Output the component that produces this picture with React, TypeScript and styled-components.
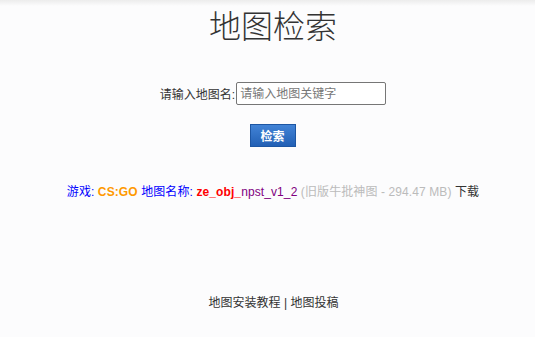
import React from 'react';
import styled, { createGlobalStyle } from 'styled-components';

const GlobalStyle = createGlobalStyle`
  html, body {
    margin: 0;
    padding: 0;
    background: #fcfcfd;
    font-family: "Liberation Sans", "Noto Sans CJK SC", sans-serif;
    color: #333;
  }
`;

const Page = styled.div`
  min-height: 337px;
  padding-left: 11px;
  display: flex;
  flex-direction: column;
  align-items: center;
  background: linear-gradient(#ececec 0px, #fcfcfd 6px);
`;

const Title = styled.h1`
  margin: 0;
  padding-top: 2px;
  font-family: "Noto Sans CJK SC", sans-serif;
  font-size: 32px;
  font-weight: 300;
  line-height: 44px;
  color: #333;
`;

const SearchRow = styled.div`
  margin-top: 36px;
  display: flex;
  align-items: center;
  font-size: 12px;
  color: #333;
`;

const Input = styled.input`
  box-sizing: border-box;
  width: 150px;
  height: 23px;
  margin-left: 1px;
  padding: 0 3px;
  border: 1px solid #767676;
  border-radius: 2px;
  font-family: inherit;
  font-size: 12px;
  background: #fff;
  &::placeholder { color: #777; }
`;

const Button = styled.button`
  margin-top: 19px;
  margin-left: -1px;
  width: 46px;
  height: 23px;
  border: 1px solid #1d56a3;
  background: linear-gradient(#4283d6, #2260b5);
  color: #fff;
  font-family: inherit;
  font-size: 12px;
  font-weight: bold;
  padding: 0;
`;

const Result = styled.div`
  margin-top: 36px;
  font-size: 12px;
  line-height: 18px;
  letter-spacing: 0.1px;
`;

const Span = styled.span<{ $c: string; $b?: boolean }>`
  color: ${p => p.$c};
  font-weight: ${p => (p.$b ? 'bold' : 'normal')};
`;

const Footer = styled.div`
  margin-top: 92px;
  font-size: 12px;
  color: #333;
  margin-left: 1px;
`;

export default function App() {
  return (
    <>
      <GlobalStyle />
      <Page>
        <Title>地图检索</Title>
        <SearchRow>
          请输入地图名:<Input placeholder="请输入地图关键字" />
        </SearchRow>
        <Button>检索</Button>
        <Result>
          <Span $c="#0000ff">游戏: </Span>
          <Span $c="#ff9900" $b>CS:GO</Span>{' '}
          <Span $c="#0000ff">地图名称: </Span>
          <Span $c="#ff0000" $b>ze_obj_</Span>
          <Span $c="#800080">npst_v1_2</Span>{' '}
          <Span $c="#bbbbbb">(旧版牛批神图 - 294.47 MB)</Span>{' '}
          <Span $c="#333">下载</Span>
        </Result>
        <Footer>地图安装教程 | 地图投稿</Footer>
      </Page>
    </>
  );
}
